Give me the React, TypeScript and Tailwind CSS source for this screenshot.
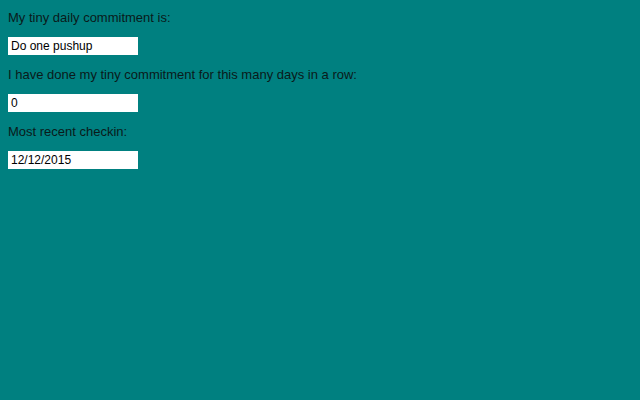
import React from 'react';

export default function App() {
  const rows = [
    { label: 'My tiny daily commitment is:', value: 'Do one pushup' },
    { label: 'I have done my tiny commitment for this many days in a row:', value: '0' },
    { label: 'Most recent checkin:', value: '12/12/2015' },
  ];

  return (
    <main className="min-h-[400px] w-full bg-[#008080] px-2 pt-[10px] text-[13px] leading-[15px] text-[#0a1a1a] font-['Liberation_Sans',Arial,sans-serif]">
      {rows.map((r) => (
        <div key={r.label} className="flex flex-col items-start">
          <p className="h-[15px]">{r.label}</p>
          <div className="mt-3 mb-3 flex h-[18px] w-[130px] items-center bg-white px-[3px] text-[12px] text-black">
            {r.value}
          </div>
        </div>
      ))}
    </main>
  );
}
